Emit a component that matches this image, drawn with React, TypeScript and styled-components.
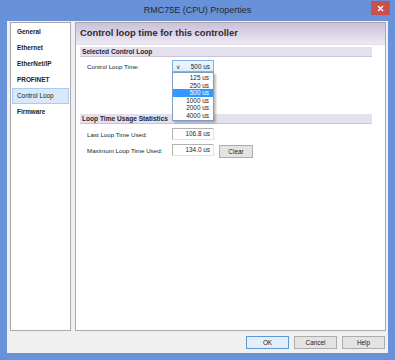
import React from 'react'
import styled, { createGlobalStyle } from 'styled-components'

const Global = createGlobalStyle`
  html, body { margin: 0; padding: 0; background: #ffffff; }
  * { box-sizing: border-box; }
  body { font-family: "Liberation Sans", Arial, sans-serif; color: #1e1e1e; }
`

const Frame = styled.div`
  width: 395px;
  height: 360px;
  background: #6891d9;
  display: flex;
  flex-direction: column;
`

const TitleBar = styled.div`
  height: 21px;
  display: grid;
  grid-template-columns: 1fr auto 1fr;
  align-items: start;
`

const Title = styled.div`
  grid-column: 2;
  font-size: 9px;
  line-height: 20px;
  color: #1f2a3c;
`

const Close = styled.div`
  grid-column: 3;
  justify-self: end;
  margin: 1px 5px 0 0;
  width: 19px;
  height: 14px;
  background: #c9504d;
  display: flex;
  align-items: center;
  justify-content: center;
`

const Client = styled.div`
  flex: 1;
  margin: 0 7px 7px;
  background: #f0f0f0;
  display: flex;
  flex-direction: column;
  padding: 1px 2px 4px 3px;
`

const Body = styled.div`
  flex: 1;
  display: flex;
  gap: 4px;
`

const Nav = styled.div`
  width: 61px;
  background: #ffffff;
  border: 1px solid #a9a9a9;
  padding: 1px 1px;
  display: flex;
  flex-direction: column;
`

const NavItem = styled.div<{ $active?: boolean }>`
  height: 16px;
  padding-left: 4px;
  font-size: 6.4px;
  line-height: 14px;
  font-weight: ${p => (p.$active ? 'normal' : 'bold')};
  background: ${p => (p.$active ? '#d9e8f9' : 'transparent')};
  border: 1px solid ${p => (p.$active ? '#a8cbef' : 'transparent')};
  color: #222;
`

const Panel = styled.div`
  flex: 1;
  background: #ffffff;
  border: 1px solid #a9a9a9;
  display: flex;
  flex-direction: column;
`

const Header = styled.div`
  height: 22px;
  background: linear-gradient(#cbc0db, #ede8f2);
  border-bottom: 1px solid #e2dcea;
  font-size: 9.4px;
  font-weight: bold;
  line-height: 20px;
  padding-left: 4px;
  color: #2b2b33;
`

const Content = styled.div`
  padding: 2px 13px 0 4px;
  display: flex;
  flex-direction: column;
`

const SectionHead = styled.div<{ $top?: number }>`
  margin-top: ${p => p.$top ?? 0}px;
  height: 10px;
  background: #e5e0ed;
  border-bottom: 1px solid #cbc4d6;
  font-size: 6.6px;
  font-weight: bold;
  line-height: 10px;
  padding-left: 2px;
  color: #262633;
`

const Row = styled.div<{ $top: number }>`
  margin-top: ${p => p.$top}px;
  display: flex;
  align-items: center;
  padding-left: 7px;
  height: 12px;
`

const Label = styled.div`
  width: 85px;
  font-size: 6.2px;
  color: #222;
`

const SelectWrap = styled.div`
  position: relative;
  width: 42px;
  height: 12px;
`

const SelectBox = styled.div`
  height: 12px;
  border: 1px solid #7db2e8;
  background: linear-gradient(#f0f7fd, #dcecfb);
  display: flex;
  align-items: center;
  justify-content: space-between;
  padding: 0 3px 0 3px;
  font-size: 6.4px;
`

const Chevron = styled.span`
  font-size: 6px;
  color: #333;
`

const List = styled.div`
  position: absolute;
  top: 12px;
  left: 0;
  width: 42px;
  background: #ffffff;
  border: 1px solid #7a9cc6;
  box-shadow: 2px 2px 2px rgba(0, 0, 0, 0.25);
  padding: 1px 0;
`

const ListItem = styled.div<{ $sel?: boolean }>`
  height: 7.5px;
  line-height: 7.5px;
  font-size: 6.4px;
  text-align: right;
  padding-right: 4px;
  background: ${p => (p.$sel ? '#3399ff' : 'transparent')};
  color: ${p => (p.$sel ? '#ffffff' : '#222')};
`

const Field = styled.div`
  width: 42px;
  height: 12px;
  border: 1px solid #b3b3b3;
  border-bottom-color: #e3e3e3;
  border-right-color: #e3e3e3;
  font-size: 6.4px;
  line-height: 9px;
  text-align: right;
  padding-right: 3px;
`

const SmallButton = styled.div`
  margin-left: 5px;
  margin-top: 2px;
  width: 34px;
  height: 13px;
  border: 1px solid #adadad;
  background: #e3e3e3;
  font-size: 6.4px;
  line-height: 11px;
  text-align: center;
`

const Footer = styled.div`
  height: 13px;
  margin-top: 5px;
  display: flex;
  justify-content: flex-end;
  gap: 5px;
  padding-right: 1px;
`

const Button = styled.div<{ $default?: boolean }>`
  width: 43px;
  height: 13px;
  border: 1px solid ${p => (p.$default ? '#5b9bd5' : '#acacac')};
  background: ${p => (p.$default ? '#e5eef8' : '#e3e3e3')};
  font-size: 6.4px;
  line-height: 11px;
  text-align: center;
`

const items = ['General', 'Ethernet', 'EtherNet/IP', 'PROFINET', 'Control Loop', 'Firmware']
const times = ['125 us', '250 us', '500 us', '1000 us', '2000 us', '4000 us']

export default function App() {
  return (
    <>
      <Global />
      <Frame>
        <TitleBar>
          <Title>RMC75E (CPU) Properties</Title>
          <Close>
            <svg width="7" height="7" viewBox="0 0 7 7">
              <path d="M1 1L6 6M6 1L1 6" stroke="#ffffff" strokeWidth="1.4" />
            </svg>
          </Close>
        </TitleBar>
        <Client>
          <Body>
            <Nav>
              {items.map(it => (
                <NavItem key={it} $active={it === 'Control Loop'}>{it}</NavItem>
              ))}
            </Nav>
            <Panel>
              <Header>Control loop time for this controller</Header>
              <Content>
                <SectionHead>Selected Control Loop</SectionHead>
                <Row $top={3}>
                  <Label>Control Loop Time:</Label>
                  <SelectWrap>
                    <SelectBox>
                      <Chevron>&#8744;</Chevron>
                      <span>500 us</span>
                    </SelectBox>
                    <List>
                      {times.map(t => (
                        <ListItem key={t} $sel={t === '500 us'}>{t}</ListItem>
                      ))}
                    </List>
                  </SelectWrap>
                </Row>
                <SectionHead $top={42}>Loop Time Usage Statistics</SectionHead>
                <Row $top={4}>
                  <Label>Last Loop Time Used:</Label>
                  <Field>106.8 us</Field>
                </Row>
                <Row $top={4}>
                  <Label>Maximum Loop Time Used:</Label>
                  <Field>134.0 us</Field>
                  <SmallButton>Clear</SmallButton>
                </Row>
              </Content>
            </Panel>
          </Body>
          <Footer>
            <Button $default>OK</Button>
            <Button>Cancel</Button>
            <Button>Help</Button>
          </Footer>
        </Client>
      </Frame>
    </>
  )
}
